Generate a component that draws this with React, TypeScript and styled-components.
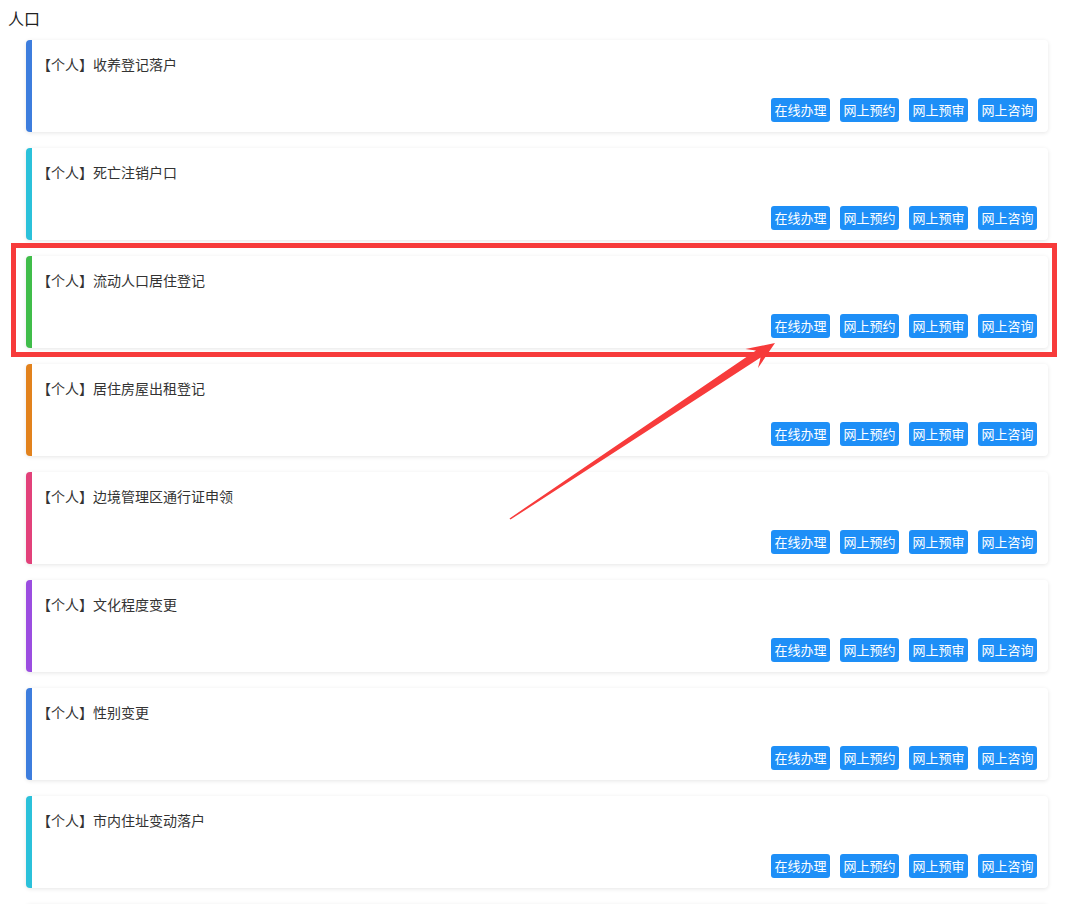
import styled, { createGlobalStyle } from "styled-components";

const GlobalStyle = createGlobalStyle`
  body {
    margin: 8px;
    background: #fff;
    font-family: "Noto Sans CJK SC", "Noto Sans", sans-serif;
    color: #333;
  }
`;

const Page = styled.div`
  position: relative;
`;

const SectionTitle = styled.h3`
  margin: 0;
  height: 22px;
  line-height: 20px;
  font-size: 16px;
  font-weight: normal;
  color: #222;
`;

const List = styled.div`
  display: flex;
  flex-direction: column;
  gap: 16px;
  margin: 10px 12px 0 18px;
`;

const Card = styled.div<{ $accent: string }>`
  display: flex;
  flex-direction: column;
  justify-content: space-between;
  height: 92px;
  box-sizing: border-box;
  padding: 14px 11px 10px 5px;
  background: #fff;
  border-left: 6px solid ${(p) => p.$accent};
  border-radius: 4px;
  box-shadow: 0 1px 4px rgba(0, 0, 0, .1);
`;

const CardTitle = styled.div`
  font-size: 14px;
  line-height: 20px;
  color: #333;
`;

const Actions = styled.div`
  display: flex;
  justify-content: flex-end;
  gap: 10px;
`;

const ActionButton = styled.button`
  height: 24px;
  padding: 0 3.5px;
  border: none;
  border-radius: 3px;
  background: #1e8ff7;
  color: #fff;
  font-family: inherit;
  font-size: 13px;
  line-height: 24px;
  cursor: pointer;
`;

const Highlight = styled.div`
  position: absolute;
  left: 3px;
  top: 235px;
  width: 1046px;
  height: 114px;
  box-sizing: border-box;
  border: 5px solid #f73b3b;
  pointer-events: none;
`;

const Arrow = styled.svg`
  position: absolute;
  left: -8px;
  top: -8px;
  width: 1068px;
  height: 904px;
  pointer-events: none;
`;

const items = [
  { name: "收养登记落户", color: "#3d7ddd" },
  { name: "死亡注销户口", color: "#2bc1da" },
  { name: "流动人口居住登记", color: "#40bd4a" },
  { name: "居住房屋出租登记", color: "#e2821d" },
  { name: "边境管理区通行证申领", color: "#e2417a" },
  { name: "文化程度变更", color: "#9b4de0" },
  { name: "性别变更", color: "#3d7ddd" },
  { name: "市内住址变动落户", color: "#2bc1da" },
];

const actions = ["在线办理", "网上预约", "网上预审", "网上咨询"];

function App() {
  return (
    <Page>
      <GlobalStyle />
      <SectionTitle>人口</SectionTitle>
      <List>
        {items.map((item) => (
          <Card key={item.name} $accent={item.color}>
            <CardTitle>【个人】{item.name}</CardTitle>
            <Actions>
              {actions.map((a) => (
                <ActionButton key={a}>{a}</ActionButton>
              ))}
            </Actions>
          </Card>
        ))}
        {/* next card only peeks in at the bottom edge */}
        <Card $accent="#40bd4a" />
      </List>

      <Highlight />
      <Arrow viewBox="0 0 1068 904">
        <polygon
          fill="#f73b3b"
          points="510.5,519.6 760.6,357.6 758,368 775,343 745.4,349 756,350.6 509.5,518.4"
        />
      </Arrow>
    </Page>
  );
}

export default App;
